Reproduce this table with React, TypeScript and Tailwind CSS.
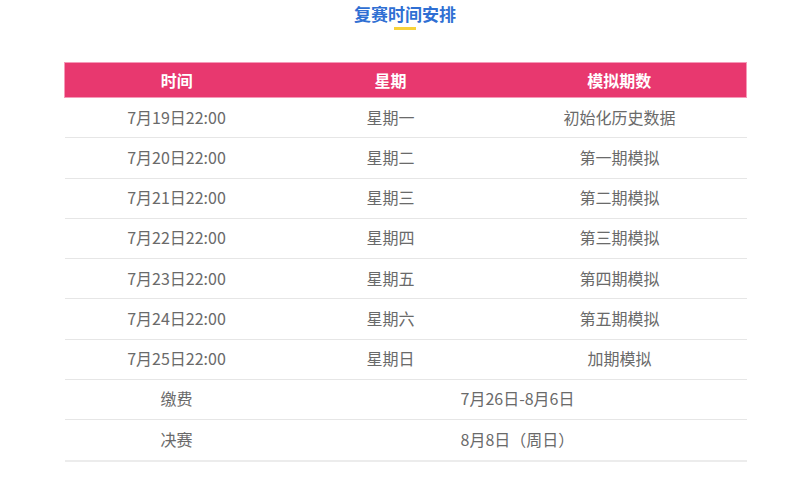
import React from 'react'

const rows = [
  ['7月19日22:00', '星期一', '初始化历史数据'],
  ['7月20日22:00', '星期二', '第一期模拟'],
  ['7月21日22:00', '星期三', '第二期模拟'],
  ['7月22日22:00', '星期四', '第三期模拟'],
  ['7月23日22:00', '星期五', '第四期模拟'],
  ['7月24日22:00', '星期六', '第五期模拟'],
  ['7月25日22:00', '星期日', '加期模拟'],
]

const extra = [
  ['缴费', '7月26日-8月6日'],
  ['决赛', '8月8日（周日）'],
]

export default function App() {
  return (
    <div
      className="min-h-[487px] bg-white"
      style={{ fontFamily: '"Noto Sans CJK SC", "Noto Sans", sans-serif' }}
    >
      <div className="ml-[64px] w-[682px] pt-[4px]">
        <div className="flex flex-col items-center">
          <h2 className="text-[17px] font-bold leading-[20px] text-[#2f6fd3]">
            复赛时间安排
          </h2>
          <div className="mt-[3px] h-[3px] w-[22px] bg-[#f7d23a]" />
        </div>
        <table className="mt-[32px] w-full table-fixed border-collapse text-center text-[16px] text-[#6a6a6a]">
          <colgroup>
            <col className="w-[224px]" />
            <col className="w-[204px]" />
            <col className="w-[254px]" />
          </colgroup>
          <thead>
            <tr className="h-[35px] border border-[#f59ab8] bg-[#e8386f] text-white">
              <th className="font-bold">时间</th>
              <th className="font-bold">星期</th>
              <th className="font-bold">模拟期数</th>
            </tr>
          </thead>
          <tbody>
            {rows.map((r) => (
              <tr key={r[0]} className="h-[40.25px] border-b border-[#e6e6e6]">
                <td className="pb-[2px]">{r[0]}</td>
                <td className="pb-[2px]">{r[1]}</td>
                <td className="pb-[2px]">{r[2]}</td>
              </tr>
            ))}
            {extra.map((r, i) => (
              <tr
                key={r[0]}
                className={
                  i === extra.length - 1
                    ? 'h-[41px] border-b-2 border-[#ececec]'
                    : 'h-[40.25px] border-b border-[#e6e6e6]'
                }
              >
                <td className="pb-[2px]">{r[0]}</td>
                <td className="pb-[2px]" colSpan={2}>{r[1]}</td>
              </tr>
            ))}
          </tbody>
        </table>
      </div>
    </div>
  )
}
